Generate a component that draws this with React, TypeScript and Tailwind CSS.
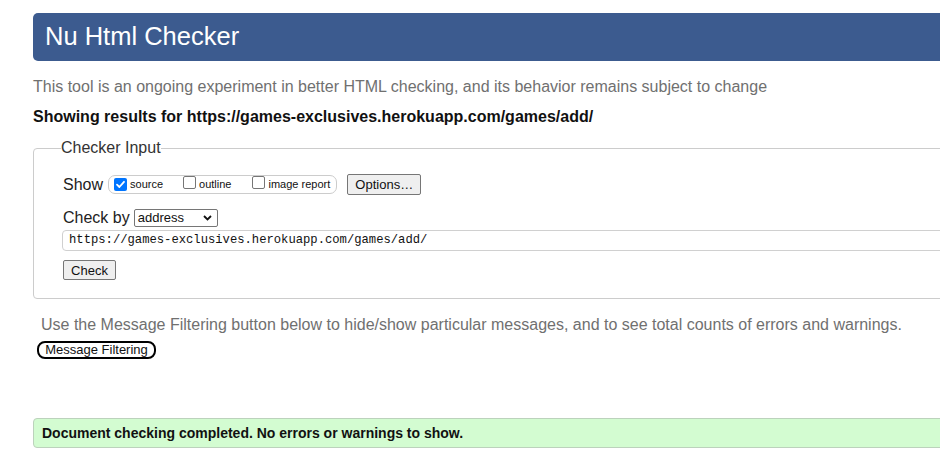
import React from "react";

function Box({ checked }: { checked?: boolean }) {
  if (checked) {
    return (
      <span className="inline-flex h-[13px] w-[13px] items-center justify-center rounded-[2px] bg-[#0075ff]">
        <svg width="11" height="11" viewBox="0 0 11 11">
          <path d="M2 5.6 L4.4 8 L9 2.8" fill="none" stroke="white" strokeWidth="1.8" strokeLinecap="round" strokeLinejoin="round" />
        </svg>
      </span>
    );
  }
  return <span className="inline-block h-[13px] w-[13px] rounded-[2px] border border-[#767676] bg-white" />;
}

export default function App() {
  return (
    <div className="h-[454px] w-[940px] overflow-hidden bg-white" style={{ fontFamily: '"Liberation Sans", Arial, sans-serif' }}>
      <div className="w-[1100px] pl-[33px] pt-[13px]">
        <div className="flex h-[48px] items-center rounded-l-[5px] bg-[#3c5b8f] pl-[12px]">
          <h1 className="text-[25.5px] leading-none text-white">Nu Html Checker</h1>
        </div>
        <p className="mt-[17px] text-[16px] leading-[18px] text-[#707070]">
          This tool is an ongoing experiment in better HTML checking, and its behavior remains subject to change
        </p>
        <p className="mt-[12px] text-[16px] font-bold leading-[18px] text-[#111]">
          Showing results for https://games-exclusives.herokuapp.com/games/add/
        </p>
        <fieldset className="mt-[13px] rounded-[4px] border border-[#cccccc] pb-[16px] pl-[29px]">
          <legend className="ml-[-2px] text-[16px] leading-[18px] text-[#333]">Checker Input</legend>
          <div className="mt-[17px] flex items-center">
            <span className="text-[16px] leading-[18px] text-[#222]">Show</span>
            <div className="ml-[5px] flex h-[19px] items-center rounded-[7px] border border-[#cccccc] pl-[5px] pr-[6px] text-[11px] text-[#111]">
              <Box checked />
              <span className="ml-[3px]">source</span>
              <span className="ml-[20px]"><Box /></span>
              <span className="ml-[3px]">outline</span>
              <span className="ml-[21px]"><Box /></span>
              <span className="ml-[3px]">image report</span>
            </div>
            <button className="ml-[10px] h-[21px] w-[74px] rounded-[2px] border border-[#767676] bg-[#efefef] text-[13px] text-[#111]">
              Options…
            </button>
          </div>
          <div className="mt-[14px] flex items-center">
            <span className="text-[16px] leading-[18px] text-[#222]">Check by</span>
            <div className="ml-[4px] flex h-[18px] w-[84px] items-center justify-between rounded-[2px] border border-[#767676] bg-white pl-[3px] pr-[5px] text-[13px] text-[#111]">
              <span>address</span>
              <svg width="9" height="6" viewBox="0 0 9 6">
                <path d="M1 1 L4.5 4.5 L8 1" fill="none" stroke="#111" strokeWidth="1.8" />
              </svg>
            </div>
          </div>
          <div className="ml-[-1px] mt-[3px] flex h-[21px] items-center rounded-[4px] border border-[#d0d0d0] pl-[6px] text-[12.2px] text-[#111]" style={{ fontFamily: '"Liberation Mono", monospace' }}>
            https://games-exclusives.herokuapp.com/games/add/
          </div>
          <button className="mt-[9px] h-[20px] w-[53px] rounded-[2px] border border-[#767676] bg-[#efefef] text-[13px] text-[#111]">
            Check
          </button>
        </fieldset>
        <p className="ml-[8px] mt-[17px] text-[16px] leading-[18px] text-[#707070]">
          Use the Message Filtering button below to hide/show particular messages, and to see total counts of errors and warnings.
        </p>
        <button className="ml-[4px] mt-[7px] flex h-[18px] w-[119px] items-center justify-center rounded-[8px] border-2 border-black bg-white text-[13px] text-[#111]">
          Message Filtering
        </button>
        <div className="mt-[59px] flex h-[30px] items-center rounded-l-[4px] border border-[#bcd2bc] bg-[#d3fcd1] pl-[8px] text-[14px] font-bold text-[#111]">
          Document checking completed. No errors or warnings to show.
        </div>
      </div>
    </div>
  );
}
